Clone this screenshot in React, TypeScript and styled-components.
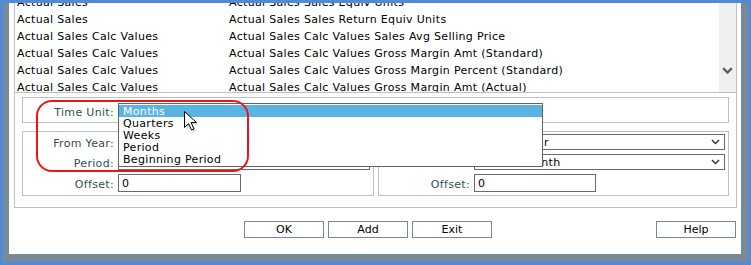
import React from "react";
import styled, { createGlobalStyle } from "styled-components";

const GlobalStyle = createGlobalStyle`
  html, body {
    margin: 0;
    padding: 0;
    background: #4f8ad6;
  }
  body {
    font-family: "DejaVu Sans", Verdana, sans-serif;
    font-size: 11px;
    letter-spacing: 0.32px;
  }
  * {
    box-sizing: border-box;
  }
`;

const Window = styled.div`
  width: 751px;
  height: 265px;
  padding: 3px;
  background: #4f8ad6;
`;

const Frame = styled.div`
  height: 100%;
  background: #77899a;
  padding: 0 7px 8px 6px;
`;

const Client = styled.div`
  position: relative;
  height: 100%;
  background: #fff;
  padding: 0 4px 0 5px;
  display: flex;
  flex-direction: column;
  overflow: hidden;
`;

const List = styled.div`
  height: 90px;
  display: flex;
  border: 1px solid #c0c0c0;
  border-top: none;
`;

const Rows = styled.div`
  flex: 1;
  overflow: hidden;
  padding-left: 2px;
`;

const RowsInner = styled.div`
  margin-top: -9px;
`;

const Row = styled.div`
  display: flex;
  height: 17px;
  line-height: 17px;
  color: #000;
  white-space: nowrap;
`;

const Cell = styled.span<{ $w?: number }>`
  flex: ${(p) => (p.$w ? `0 0 ${p.$w}px` : "1")};
`;

const Scrollbar = styled.div`
  width: 17px;
  background: #f0f0f0;
  display: flex;
  flex-direction: column;
  justify-content: flex-end;
  align-items: center;
  padding-bottom: 18px;
`;

const Panel = styled.div`
  border: 1px solid #c0c0c0;
  border-top: none;
  padding: 4px 7px 11px 7px;
`;

const Box = styled.div<{ $pt: number; $pb: number }>`
  border: 1px solid #c0c0c0;
  padding: ${(p) => `${p.$pt}px 3px ${p.$pb}px 0`};
  display: grid;
  grid-template-columns: 91px 1fr;
  column-gap: 4px;
  row-gap: 4px;
  align-items: center;
`;

const Boxes = styled.div`
  margin-top: 8px;
  display: grid;
  grid-template-columns: 352px 351px;
  column-gap: 4px;
`;

const Label = styled.label`
  color: #2f4f4f;
  text-align: right;
  white-space: nowrap;
  padding-top: 2px;
`;

const SelectWrap = styled.div`
  position: relative;
`;

const Select = styled.div<{ $w?: number }>`
  height: 16px;
  width: ${(p) => (p.$w ? `${p.$w}px` : "100%")};
  border: 1px solid #6a6a6a;
  background: #fff;
  display: flex;
  align-items: center;
  justify-content: space-between;
  padding: 0 4px 0 2px;
  white-space: nowrap;
  overflow: hidden;
`;

const Input = styled.div<{ $w: number }>`
  height: 18px;
  width: ${(p) => p.$w}px;
  border: 1px solid #6a6a6a;
  display: flex;
  align-items: center;
  padding-left: 3px;
`;

const Dropdown = styled.ul`
  position: absolute;
  top: 0;
  left: 0;
  width: 425px;
  height: 64px;
  margin: 0;
  padding: 1px 0 0 0;
  list-style: none;
  background: #fff;
  border: 1px solid #646464;
  z-index: 2;
`;

const Option = styled.li<{ $active?: boolean }>`
  height: 12px;
  line-height: 14px;
  padding-left: 4px;
  background: ${(p) => (p.$active ? "#5ab4e1" : "transparent")};
  color: ${(p) => (p.$active ? "#fff" : "#000")};
  overflow: visible;
`;

const Buttons = styled.div`
  margin-top: 13px;
  display: flex;
  gap: 4px;
  padding-left: 230px;
  padding-right: 1px;
`;

const Button = styled.button<{ $push?: boolean }>`
  width: 80px;
  height: 17px;
  padding: 0;
  border: 1px solid #76889a;
  background: #fff;
  color: #000;
  font: inherit;
  font-size: 11px;
  line-height: 14px;
  margin-left: ${(p) => (p.$push ? "auto" : "0")};
`;

const Highlight = styled.div`
  position: absolute;
  left: 27px;
  top: 97px;
  width: 213px;
  height: 72px;
  border: 2px solid #ee1515;
  border-radius: 16px;
  z-index: 3;
  pointer-events: none;
`;

const Cursor = styled.svg`
  position: absolute;
  left: 174px;
  top: 107px;
  z-index: 4;
`;

const Chevron = ({ color = "#333", w = 9 }: { color?: string; w?: number }) => (
  <svg width={w} height={w * 0.6} viewBox="0 0 10 6">
    <path d="M1 1 L5 5 L9 1" fill="none" stroke={color} strokeWidth={w > 9 ? 2.2 : 1.6} />
  </svg>
);

const rows = [
  ["Actual Sales", "Actual Sales Sales Equiv Units"],
  ["Actual Sales", "Actual Sales Sales Return Equiv Units"],
  ["Actual Sales Calc Values", "Actual Sales Calc Values Sales Avg Selling Price"],
  ["Actual Sales Calc Values", "Actual Sales Calc Values Gross Margin Amt (Standard)"],
  ["Actual Sales Calc Values", "Actual Sales Calc Values Gross Margin Percent (Standard)"],
  ["Actual Sales Calc Values", "Actual Sales Calc Values Gross Margin Amt (Actual)"],
];

const timeUnits = ["Months", "Quarters", "Weeks", "Period", "Beginning Period"];

export default function App() {
  return (
    <Window>
      <GlobalStyle />
      <Frame>
        <Client>
          <List>
            <Rows>
              <RowsInner>
                {rows.map(([a, b], i) => (
                  <Row key={i}>
                    <Cell $w={212}>{a}</Cell>
                    <Cell>{b}</Cell>
                  </Row>
                ))}
              </RowsInner>
            </Rows>
            <Scrollbar>
              <Chevron color="#606060" w={11} />
            </Scrollbar>
          </List>

          <Panel>
            <Box $pt={5} $pb={3}>
              <Label>Time Unit:</Label>
              <SelectWrap>
                <Select $w={425}>
                  <span>Months</span>
                  <Chevron />
                </Select>
                <Dropdown>
                  {timeUnits.map((t, i) => (
                    <Option key={t} $active={i === 0}>
                      {t}
                    </Option>
                  ))}
                </Dropdown>
              </SelectWrap>
            </Box>

            <Boxes>
              <Box $pt={2} $pb={3}>
                <Label>From Year:</Label>
                <Select>
                  <span>Current Year</span>
                  <Chevron />
                </Select>
                <Label>Period:</Label>
                <Select>
                  <span>Current Month</span>
                  <Chevron />
                </Select>
                <Label>Offset:</Label>
                <Input $w={123}>0</Input>
              </Box>
              <Box $pt={2} $pb={3}>
                <Label>To Year:</Label>
                <Select>
                  <span>Current Year</span>
                  <Chevron />
                </Select>
                <Label>Period:</Label>
                <Select>
                  <span>Current Month</span>
                  <Chevron />
                </Select>
                <Label>Offset:</Label>
                <Input $w={122}>0</Input>
              </Box>
            </Boxes>
          </Panel>

          <Buttons>
            <Button>OK</Button>
            <Button>Add</Button>
            <Button>Exit</Button>
            <Button $push>Help</Button>
          </Buttons>

          <Highlight />
          <Cursor width="20" height="26" viewBox="0 0 20 26">
            <path
              d="M3.5 3.5 L3.5 19.5 L7.5 15.5 L10.5 22 L13 21 L10 14.5 L15.5 14.5 Z"
              fill="#9a9a9a"
              opacity="0.45"
            />
            <path
              d="M1.5 1.5 L1.5 17.5 L5.5 13.5 L8.5 20 L11 19 L8 12.5 L13.5 12.5 Z"
              fill="#fff"
              stroke="#000"
              strokeWidth="1"
              strokeLinejoin="miter"
            />
          </Cursor>
        </Client>
      </Frame>
    </Window>
  );
}
